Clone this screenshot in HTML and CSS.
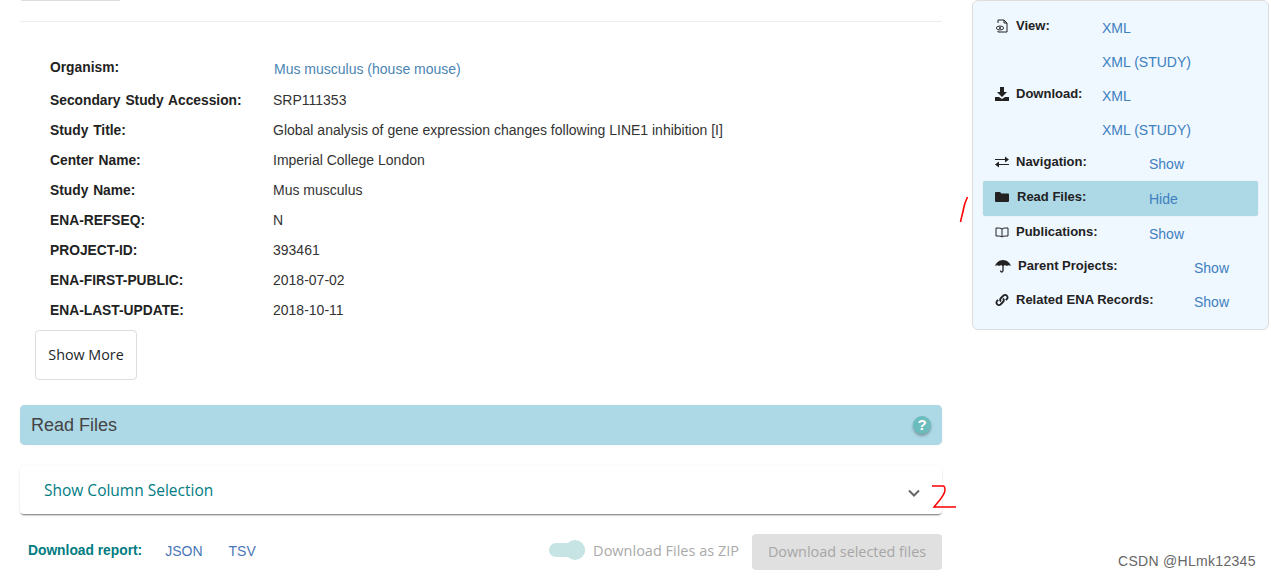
FILE: index.html
```html
<!DOCTYPE html>
<html lang="en">
<head>
  <meta charset="UTF-8" />
  <title>Study SRP111353</title>
  <link rel="stylesheet" href="styles.css">
</head>
<body>
  <div class="page">
    <main class="main">
      <div class="tab-stub"></div>
      <hr class="divider">

      <div class="details">
        <div class="detail-row organism-row">
          <span class="detail-label">Organism:</span>
          <a class="detail-value link" href="#">Mus musculus (house mouse)</a>
        </div>
        <div class="detail-row"><span class="detail-label">Secondary Study Accession:</span><span class="detail-value">SRP111353</span></div>
        <div class="detail-row"><span class="detail-label">Study Title:</span><span class="detail-value">Global analysis of gene expression changes following LINE1 inhibition [I]</span></div>
        <div class="detail-row"><span class="detail-label">Center Name:</span><span class="detail-value">Imperial College London</span></div>
        <div class="detail-row"><span class="detail-label">Study Name:</span><span class="detail-value">Mus musculus</span></div>
        <div class="detail-row"><span class="detail-label">ENA-REFSEQ:</span><span class="detail-value">N</span></div>
        <div class="detail-row"><span class="detail-label">PROJECT-ID:</span><span class="detail-value">393461</span></div>
        <div class="detail-row"><span class="detail-label">ENA-FIRST-PUBLIC:</span><span class="detail-value">2018-07-02</span></div>
        <div class="detail-row"><span class="detail-label">ENA-LAST-UPDATE:</span><span class="detail-value">2018-10-11</span></div>
      </div>

      <button class="show-more">Show More</button>

      <div class="section-bar">
        <h2>Read Files</h2>
        <span class="help-dot">?</span>
      </div>

      <div class="column-panel">
        <span>Show Column Selection</span>
        <svg class="chevron" width="12" height="8" viewBox="0 0 12 8"><path d="M1 1.500l5 5 5-5" fill="none" stroke="#666" stroke-width="2"/></svg>
      </div>

      <div class="report-row">
        <strong class="report-label">Download report:</strong>
        <a class="report-link" href="#">JSON</a>
        <a class="report-link" href="#">TSV</a>
        <div class="zip-toggle">
          <span class="switch"><span class="knob"></span></span>
          <span>Download Files as ZIP</span>
        </div>
        <button class="download-btn" disabled>Download selected files</button>
      </div>
    </main>

    <aside class="sidebar">
      <div class="side-row">
        <svg class="side-icon" viewBox="0 0 14 14"><path d="M3 4V1h6l3 3v9H3v-1M9 1v3h3" fill="none" stroke="#222" stroke-width="1"/><ellipse cx="5" cy="9" rx="3.600" ry="2" fill="#eff7ff" stroke="#222"/><circle cx="5" cy="9" r="1" fill="#222"/></svg>
        <span class="side-label">View:</span>
        <a class="side-link" href="#">XML</a>
      </div>
      <div class="side-row">
        <span class="side-label"></span>
        <a class="side-link" href="#">XML (STUDY)</a>
      </div>
      <div class="side-row">
        <svg class="side-icon" viewBox="0 0 14 14"><path d="M5 0h4v5h3L7 10 2 5h3zM0 10h4l3 2 3-2h4v4H0z" fill="#222"/></svg>
        <span class="side-label">Download:</span>
        <a class="side-link" href="#">XML</a>
      </div>
      <div class="side-row">
        <span class="side-label"></span>
        <a class="side-link" href="#">XML (STUDY)</a>
      </div>
      <div class="side-row side-row-mid">
        <svg class="side-icon" viewBox="0 0 14 14"><path d="M0 4h10V1.500L14 4.500 10 7.500V5H0zM14 9H4V6.500L0 9.500 4 12.500V10h10z" fill="#222"/></svg>
        <span class="side-label">Navigation:</span>
        <a class="side-link" href="#">Show</a>
      </div>
      <div class="side-row side-row-mid is-active">
        <svg class="side-icon" viewBox="0 0 14 14"><path d="M0 3a1 1 0 0 1 1-1h4l1.500 1.500H13a1 1 0 0 1 1 1V11a1 1 0 0 1-1 1H1a1 1 0 0 1-1-1z" fill="#222"/></svg>
        <span class="side-label">Read Files:</span>
        <a class="side-link" href="#">Hide</a>
      </div>
      <div class="side-row side-row-mid">
        <svg class="side-icon" viewBox="0 0 14 14"><path d="M7 4C6 3 4 3 1 3v8c3 0 5 0 6 1 1-1 3-1 6-1V3c-3 0-5 0-6 1zv8" fill="none" stroke="#222" stroke-width="1"/></svg>
        <span class="side-label">Publications:</span>
        <a class="side-link" href="#">Show</a>
      </div>
      <div class="side-row side-row-wide">
        <svg class="side-icon umbrella" viewBox="0 0 16 14"><path d="M8 1C4 1 1 4 0 7c1.500-1 3-1 4 0 1-1 3-1 4 0 1-1 3-1 4 0 1-1 2.500-1 4 0-1-3-4-6-8-6z" fill="#222"/><path d="M8 6v5.500c0 2-2.500 2-2.500 0" fill="none" stroke="#222" stroke-width="1.300"/></svg>
        <span class="side-label">Parent Projects:</span>
        <a class="side-link" href="#">Show</a>
      </div>
      <div class="side-row side-row-wide">
        <svg class="side-icon" viewBox="0 0 14 14"><path d="M6 8.500a2.500 2.500 0 0 1 0-3.500l2.500-2.500a2.500 2.500 0 0 1 3.500 3.500l-1.200 1.200M8 5.500a2.500 2.500 0 0 1 0 3.500l-2.500 2.500A2.500 2.500 0 0 1 2 8l1.200-1.200" fill="none" stroke="#222" stroke-width="1.800"/></svg>
        <span class="side-label">Related ENA Records:</span>
        <a class="side-link" href="#">Show</a>
      </div>
    </aside>
  </div>

  <!-- hand drawn marks on top of the screenshot -->
  <svg class="scribble scribble-one" width="10" height="30" viewBox="0 0 10 30"><path d="M8.500 2C6 7 5 11 4.500 14 3.800 18 2.500 22 1.500 27" fill="none" stroke="#f00" stroke-width="1.600"/></svg>
  <svg class="scribble scribble-two" width="28" height="26" viewBox="0 0 28 26"><path d="M2 2h11c2 0 2 2 2 4 0 5-6 11-11 17h22" fill="none" stroke="#f00" stroke-width="1.500"/></svg>
  <div class="watermark">CSDN @HLmk12345</div>
</body>
</html>
```

FILE: styles.css
```css
* {
  margin: 0;
  padding: 0;
  box-sizing: border-box;
}

body {
  font-family: 'Liberation Sans', Arial, sans-serif;
  font-size: 14px;
  color: #333;
  background: #fff;
  height: 576px;
  overflow: hidden;
  position: relative;
}

a {
  text-decoration: none;
}

.page {
  display: flex;
  align-items: flex-start;
  padding-left: 20px;
}

.main {
  width: 922px;
}

.tab-stub {
  width: 99px;
  height: 1px;
  margin-left: 1px;
  background: #ddd;
}

.divider {
  border: 0;
  border-top: 1px solid #eee;
  margin-top: 20px;
}

/* Study details */
.details {
  padding: 30px 0 0 30px;
}

.detail-row {
  display: flex;
  align-items: center;
  height: 30px;
}

.organism-row {
  height: 33px;
  align-items: flex-start;
}

.detail-label {
  width: 223px;
  flex-shrink: 0;
  font-size: 13.800px;
  font-weight: 700;
  color: #222;
  word-spacing: 1px;
}

.organism-row .detail-label {
  line-height: 32px;
}

.organism-row .detail-value {
  line-height: 34px;
  margin-left: 1px;
}

.detail-value {
  color: #333;
}

.detail-value.link {
  color: #4a86b4;
}

.show-more {
  display: block;
  width: 102px;
  height: 50px;
  margin: 5px 0 0 15px;
  padding-bottom: 2px;
  font-family: 'Open Sans', sans-serif;
  font-size: 14.300px;
  color: #212529;
  background: #fff;
  border: 1px solid #ddd;
  border-radius: 4px;
}

/* Read files */
.section-bar {
  display: flex;
  align-items: center;
  justify-content: space-between;
  height: 40px;
  margin-top: 25px;
  padding: 0 11px;
  background: #add8e6;
  border-radius: 5px;
  box-shadow: 0 0 1px rgba(0, 0, 0, 0.2);
}

.section-bar h2 {
  font-size: 18px;
  font-weight: 400;
  color: #444;
}

.help-dot {
  width: 18px;
  height: 18px;
  border-radius: 50%;
  background: #6bbcbc;
  color: #fff;
  font-size: 15px;
  font-weight: 700;
  line-height: 18px;
  text-align: center;
  box-shadow: 0 2px 3px rgba(0, 0, 0, 0.3);
}

.column-panel {
  display: flex;
  align-items: center;
  justify-content: space-between;
  height: 48px;
  margin-top: 21px;
  padding: 0 22px 0 24px;
  font-family: 'Open Sans', sans-serif;
  font-size: 15.500px;
  color: #007c82;
  background: #fff;
  border-radius: 4px;
  box-shadow: 0 2px 2px -1px rgba(0, 0, 0, 0.55), 0 0 3px rgba(0, 0, 0, 0.06);
}

.chevron {
  margin-top: 6px;
}

.report-row {
  display: flex;
  align-items: center;
  height: 36px;
  margin-top: 20px;
  padding-left: 8px;
}

.report-label {
  font-size: 13.800px;
  color: #007c82;
  margin: 0 23px 4px 0;
}

.report-link {
  font-size: 14px;
  color: #4a76b8;
  margin: 0 26px 2px 0;
}

.zip-toggle {
  display: flex;
  align-items: center;
  gap: 8px;
  margin: 0 13px 4px auto;
  font-family: 'Open Sans', sans-serif;
  font-size: 14.500px;
  color: #aaa;
}

.switch {
  display: block;
  position: relative;
  width: 36px;
  height: 14px;
  border-radius: 7px;
  background: #c6e4e4;
}

.knob {
  position: absolute;
  top: -3px;
  right: 0;
  width: 20px;
  height: 20px;
  border-radius: 50%;
  background: #c6e4e4;
}

.download-btn {
  width: 190px;
  height: 36px;
  padding-bottom: 2px;
  font-family: 'Open Sans', sans-serif;
  font-size: 14.400px;
  color: #a6a6a6;
  background: #e0e0e0;
  border: 0;
  border-radius: 4px;
}

/* Sidebar */
.sidebar {
  width: 297px;
  height: 330px;
  margin-left: 30px;
  padding: 10px 10px 0;
  background: #eff7ff;
  border: 1px solid #ddd;
  border-radius: 6px;
}

.side-row {
  display: flex;
  align-items: flex-start;
  height: 34px;
  padding: 7px 0 0 12px;
}

.side-icon {
  width: 14px;
  height: 14px;
  flex-shrink: 0;
  margin: 1px 7px 0 0;
}

.umbrella {
  width: 16px;
  margin-right: 7px;
}

.side-label {
  font-size: 13px;
  font-weight: 700;
  color: #222;
  flex-shrink: 0;
  width: 86px;
}

.side-row > .side-label:first-child {
  margin-left: 21px;
}

.side-link {
  font-size: 14px;
  color: #3d80bf;
  padding-top: 2px;
}

.side-row-mid .side-label {
  width: 133px;
}

.side-row-wide .side-label {
  width: 178px;
}

.umbrella + .side-label {
  width: 176px;
}

.is-active {
  height: 35px;
  padding: 8px 0 0 12px;
  background: #add8e6;
  border-radius: 3px;
  box-shadow: 0 0 1px rgba(0, 0, 0, 0.25);
}

.is-active .side-label {
  margin-left: 1px;
  width: 132px;
}

.is-active ~ .side-row {
  padding-top: 8px;
}

/* Overlays */
.scribble {
  position: absolute;
}

.scribble-one {
  left: 959px;
  top: 195px;
}

.scribble-two {
  left: 930px;
  top: 484px;
}

.watermark {
  position: absolute;
  left: 1118px;
  top: 553px;
  font-size: 14px;
  color: #666;
  letter-spacing: 0.300px;
}
```
